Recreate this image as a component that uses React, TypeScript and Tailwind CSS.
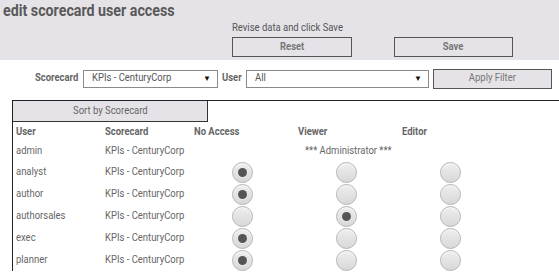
const font = "font-['Roboto',sans-serif]"

type Access = "none" | "viewer" | "editor" | "admin"

const rows: { user: string; scorecard: string; access: Access }[] = [
  { user: "admin", scorecard: "KPIs - CenturyCorp", access: "admin" },
  { user: "analyst", scorecard: "KPIs - CenturyCorp", access: "none" },
  { user: "author", scorecard: "KPIs - CenturyCorp", access: "none" },
  { user: "authorsales", scorecard: "KPIs - CenturyCorp", access: "viewer" },
  { user: "exec", scorecard: "KPIs - CenturyCorp", access: "none" },
  { user: "planner", scorecard: "KPIs - CenturyCorp", access: "none" },
]

// the page uses a narrow face; Roboto squeezed sideways stands in for it
function N({ children, center }: { children: React.ReactNode; center?: boolean }) {
  return (
    <span className={`inline-block scale-x-[0.86] ${center ? "origin-center" : "origin-left"}`}>{children}</span>
  )
}

function Radio({ checked }: { checked: boolean }) {
  return (
    <span className="ml-[38px] grid size-[21px] place-items-center rounded-full border border-[#b4b4b4] bg-gradient-to-b from-[#eeeeee] to-[#d8d8d8] shadow-[inset_0_1px_1px_#fafafa]">
      {checked && <span className="size-[9px] rounded-full bg-[#555] shadow-[0_0_0_1px_#e8e8e8]" />}
    </span>
  )
}

function Select({ value, width }: { value: string; width: string }) {
  return (
    <div className={`flex h-[18px] ${width} items-center justify-between border border-[#8a8a8a] bg-white pl-[8px] pr-[6px] text-[11px] text-[#555]`}>
      <N>{value}</N>
      <span className="text-[8px] text-[#111]">▼</span>
    </div>
  )
}

export default function App() {
  return (
    <div className={`h-[273px] w-[559px] overflow-hidden whitespace-nowrap bg-white ${font}`}>
      <header className="h-[60px] bg-[#e5e3e7] pl-[3px] pt-[2px]">
        <h1 className="text-[16px] font-bold leading-[18px] text-[#595959]">
          <span className="inline-block origin-left scale-x-[0.89]">edit scorecard user access</span>
        </h1>
        <div className="pl-[229px]">
          <p className="mt-[1px] text-[11px] leading-[14px] text-[#555]"><N>Revise data and click Save</N></p>
          <div className="mt-[2px] flex gap-[42px]">
            <button className="h-[20px] w-[120px] border border-[#555] text-[11px] font-bold text-[#777]"><N center>Reset</N></button>
            <button className="h-[20px] w-[119px] border border-[#555] text-[11px] font-bold text-[#777]"><N center>Save</N></button>
          </div>
        </div>
      </header>

      <div className="flex h-[40px] items-center pb-[3px] pl-[35px] text-[11px]">
        <span className="w-[48px] font-bold text-[#666]"><N>Scorecard</N></span>
        <Select value="KPIs - CenturyCorp" width="w-[135px]" />
        <span className="w-[28px] pl-[4px] font-bold text-[#666]"><N>User</N></span>
        <Select value="All" width="w-[183px]" />
        <button className="ml-[4px] h-[20px] w-[119px] border border-[#555] bg-[#e5e3e7] text-[11px] text-[#777]"><N center>Apply Filter</N></button>
      </div>

      <div className="ml-[12px] border-l border-t border-[#222]">
        <button className="block h-[21px] w-[195px] border-b border-r border-[#333] bg-[#e5e3e7] text-[11px] text-[#666]">
          <N center>Sort by Scorecard</N>
        </button>
        <div className="grid grid-cols-[89px_89px_104px_104px_104px] pl-[3px] text-[11px] text-[#666]">
          {["User", "Scorecard", "No Access", "Viewer", "Editor"].map((h) => (
            <div key={h} className="flex h-[20px] items-center font-bold text-[#666]"><N>{h}</N></div>
          ))}
          {rows.map((r) => (
            <div key={r.user} className="contents">
              <div className={`flex items-center ${r.access === "admin" ? "h-[19px]" : "h-[22px]"}`}><N>{r.user}</N></div>
              <div className="flex items-center"><N>{r.scorecard}</N></div>
              {r.access === "admin" ? (
                <div className="col-span-3 flex items-center justify-center pr-[4px]"><N center>*** Administrator ***</N></div>
              ) : (
                <>
                  <div className="flex items-center"><Radio checked={r.access === "none"} /></div>
                  <div className="flex items-center"><Radio checked={r.access === "viewer"} /></div>
                  <div className="flex items-center"><Radio checked={r.access === "editor"} /></div>
                </>
              )}
            </div>
          ))}
        </div>
      </div>
    </div>
  )
}
